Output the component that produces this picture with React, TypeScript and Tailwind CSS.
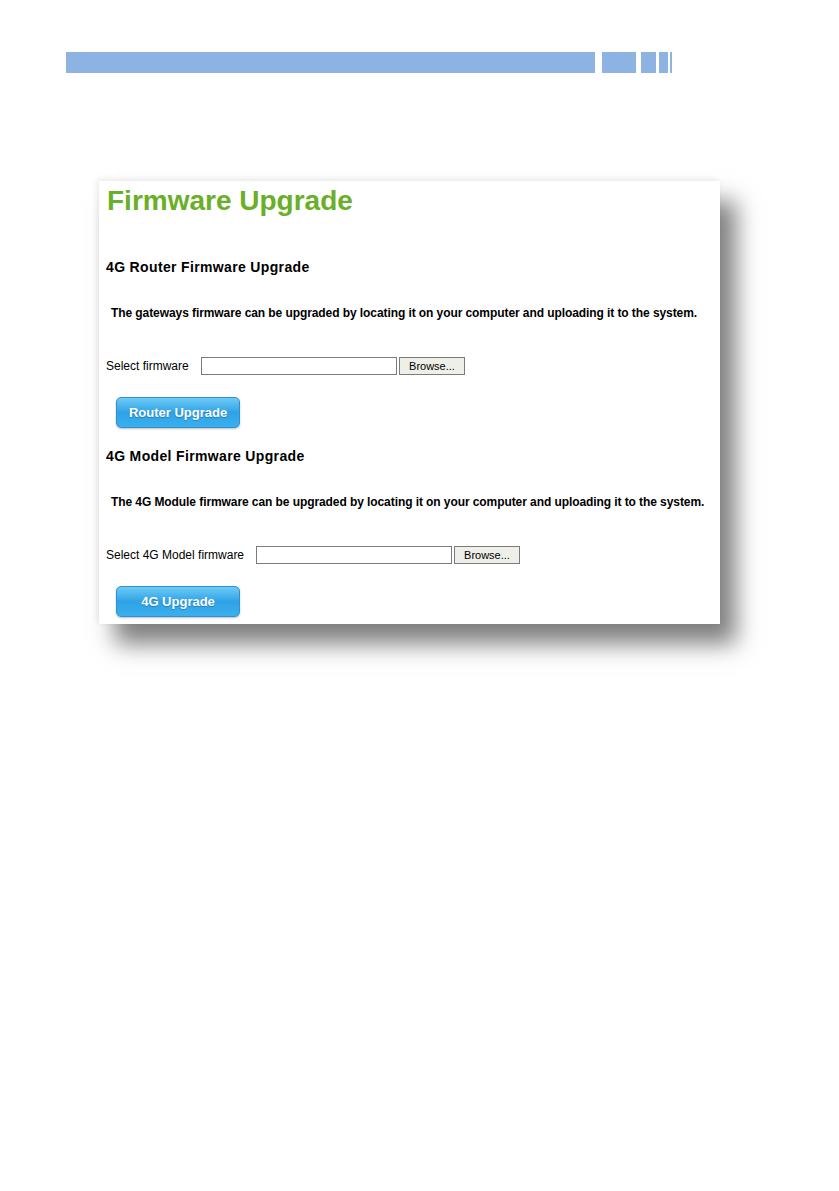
export default function App() {
  return (
    <div className="min-h-[1191px] w-[839px] bg-white font-['Liberation_Sans',Arial,sans-serif] text-black">
      {/* header bar */}
      <div className="flex pt-[52px] pl-[66px] h-[73px]">
        <div className="h-[21px] w-[529px] bg-[#8db3e2]" />
        <div className="ml-[7px] h-[21px] w-[34px] bg-[#8db3e2]" />
        <div className="ml-[5px] h-[21px] w-[15px] bg-[#8db3e2]" />
        <div className="ml-[3px] h-[21px] w-[9px] bg-[#8db3e2]" />
        <div className="ml-[2px] h-[21px] w-[2px] bg-[#8db3e2]" />
      </div>

      {/* screenshot card */}
      <div className="ml-[99px] mt-[108px] h-[443px] w-[621px] bg-white pt-[5px] shadow-[16px_20px_22px_rgba(0,0,0,0.5),-2px_-2px_6px_rgba(0,0,0,0.08)]">
        <h1 className="pl-[8px] text-[28px] leading-[30px] font-bold text-[#6aaf28]">Firmware Upgrade</h1>

        <Section
          title="4G Router Firmware Upgrade"
          desc="The gateways firmware can be upgraded by locating it on your computer and uploading it to the system."
          label="Select firmware"
          labelWidth="w-[95px]"
          button="Router Upgrade"
          first
        />
        <Section
          title="4G Model Firmware Upgrade"
          desc="The 4G Module firmware can be upgraded by locating it on your computer and uploading it to the system."
          label="Select 4G Model firmware"
          labelWidth="w-[150px]"
          button="4G Upgrade"
        />
      </div>
    </div>
  )
}

function Section({
  title,
  desc,
  label,
  labelWidth,
  button,
  first,
}: {
  title: string
  desc: string
  label: string
  labelWidth: string
  button: string
  first?: boolean
}) {
  return (
    <div className={first ? 'mt-[43px]' : 'mt-[20px]'}>
      <h2 className="pl-[7px] text-[14px] leading-[16px] font-bold tracking-[0.35px]">{title}</h2>
      <p className="mt-[31px] pl-[12px] text-[12px] leading-[14px] font-bold tracking-[-0.08px]">{desc}</p>
      <div className="mt-[37px] flex items-center pl-[7px]">
        <span className={`${labelWidth} text-[12px] leading-[18px]`}>{label}</span>
        <div className="h-[18px] w-[196px] border border-[#7b7b7b] bg-white" />
        <button className="ml-[2px] h-[18px] w-[66px] border border-[#7b7b7b] bg-[#efefe9] text-[11px] leading-[16px] text-black">
          Browse...
        </button>
      </div>
      <button className="mt-[22px] ml-[17px] h-[31px] w-[124px] rounded-[5px] border border-[#2f8fd0] bg-gradient-to-b from-[#6ccbf6] via-[#2ea2e6] to-[#3bb0ee] text-[13px] font-bold text-white [text-shadow:0_1px_1px_rgba(0,60,120,0.4)] shadow-[0_1px_2px_rgba(0,0,0,0.25)]">
        {button}
      </button>
    </div>
  )
}
